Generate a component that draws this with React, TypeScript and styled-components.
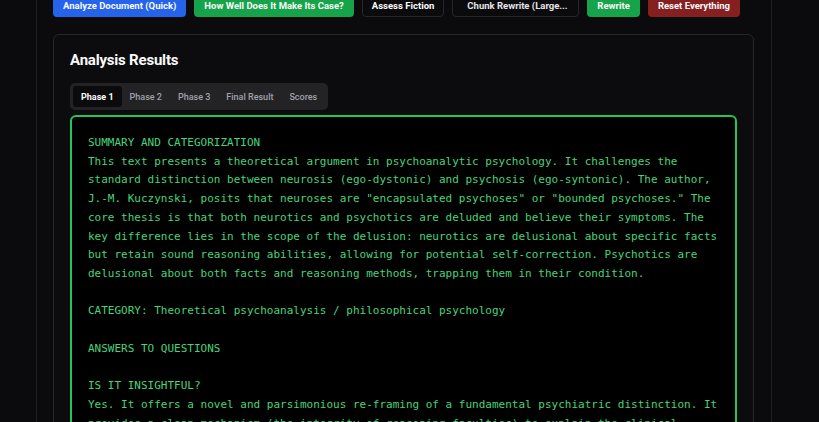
import React from "react";
import styled, { createGlobalStyle } from "styled-components";
import { ChevronDown } from "lucide-react";

const Global = createGlobalStyle`
  html, body { margin: 0; padding: 0; background: #0b0b0e; overflow: hidden; }
  body { font-family: Roboto, "Liberation Sans", sans-serif; }
`;

const Page = styled.div`
  margin-top: -7px;
  margin-left: 36px;
  width: 736px;
  min-height: 460px;
  box-sizing: border-box;
  border-left: 1px solid #1f1f23;
  border-right: 1px solid #1f1f23;
  padding: 0 17px 0 16px;
  display: flex;
  flex-direction: column;
  gap: 17px;
`;

const Toolbar = styled.div`
  display: flex;
  align-items: center;
  gap: 8px;
`;

const Btn = styled.button<{ $bg?: string; $outline?: boolean }>`
  height: 24px;
  box-sizing: border-box;
  padding: ${(p) => (p.$outline ? "0 9px" : "0 10px")};
  border-radius: 4px;
  border: ${(p) => (p.$outline ? "1px solid #27272a" : "none")};
  background: ${(p) => p.$bg ?? "#0b0b0e"};
  color: #fafafa;
  font-family: Roboto, "Liberation Sans", sans-serif;
  font-weight: 700;
  font-size: 9.5px;
  white-space: nowrap;
  display: flex;
  align-items: center;
  gap: 2px;
`;

const Select = styled(Btn)`
  width: 127px;
  padding: 0 8px 0 14px;
  justify-content: space-between;
  color: #e4e4e7;
`;

const Card = styled.section`
  border: 1px solid #27272a;
  border-radius: 6px;
  background: #0c0c0f;
  padding: 15px 16px 0 16px;
  display: flex;
  flex-direction: column;
  min-height: 420px;
`;

const Title = styled.h2`
  margin: 0;
  color: #fafafa;
  font-size: 15px;
  line-height: 20px;
  font-weight: 700;
  letter-spacing: -0.2px;
`;

const TabList = styled.div`
  margin-top: 13px;
  align-self: flex-start;
  display: flex;
  padding: 3px;
  border-radius: 5px;
  background: #232326;
`;

const Tab = styled.div<{ $active?: boolean }>`
  height: 21px;
  padding: 0 8px;
  display: flex;
  align-items: center;
  border-radius: 3px;
  font-size: 9px;
  font-weight: ${(p) => (p.$active ? 700 : 500)};
  color: ${(p) => (p.$active ? "#fafafa" : "#a1a1aa")};
  background: ${(p) => (p.$active ? "#0b0b0d" : "transparent")};
`;

const Output = styled.pre`
  margin: 5px 0 0 0;
  border: 2px solid #22c55e;
  border-radius: 6px;
  background: #000;
  padding: 17px 16px 16px 16px;
  color: #45d47a;
  font-family: "DejaVu Sans Mono", "Liberation Mono", monospace;
  font-size: 11px;
  line-height: 18.7px;
  white-space: pre;
  min-height: 320px;
`;

const text = `SUMMARY AND CATEGORIZATION
This text presents a theoretical argument in psychoanalytic psychology. It challenges the
standard distinction between neurosis (ego-dystonic) and psychosis (ego-syntonic). The author,
J.-M. Kuczynski, posits that neuroses are "encapsulated psychoses" or "bounded psychoses." The
core thesis is that both neurotics and psychotics are deluded and believe their symptoms. The
key difference lies in the scope of the delusion: neurotics are delusional about specific facts
but retain sound reasoning abilities, allowing for potential self-correction. Psychotics are
delusional about both facts and reasoning methods, trapping them in their condition.

CATEGORY: Theoretical psychoanalysis / philosophical psychology

ANSWERS TO QUESTIONS

IS IT INSIGHTFUL?
Yes. It offers a novel and parsimonious re-framing of a fundamental psychiatric distinction. It
provides a clean mechanism (the integrity of reasoning faculties) to explain the clinical`;

export default function App() {
  return (
    <>
      <Global />
      <Page>
        <Toolbar>
          <Btn $bg="#2563eb">Analyze Document (Quick)</Btn>
          <Btn $bg="#16a34a">How Well Does It Make Its Case?</Btn>
          <Btn $outline>Assess Fiction</Btn>
          <Select $outline>
            <span>Chunk Rewrite (Large...</span>
            <ChevronDown size={8} color="#a1a1aa" />
          </Select>
          <Btn $bg="#16a34a">Rewrite</Btn>
          <Btn $bg="#861f1f">Reset Everything</Btn>
        </Toolbar>
        <Card>
          <Title>Analysis Results</Title>
          <TabList>
            <Tab $active>Phase 1</Tab>
            <Tab>Phase 2</Tab>
            <Tab>Phase 3</Tab>
            <Tab>Final Result</Tab>
            <Tab>Scores</Tab>
          </TabList>
          <Output>{text}</Output>
        </Card>
      </Page>
    </>
  );
}
